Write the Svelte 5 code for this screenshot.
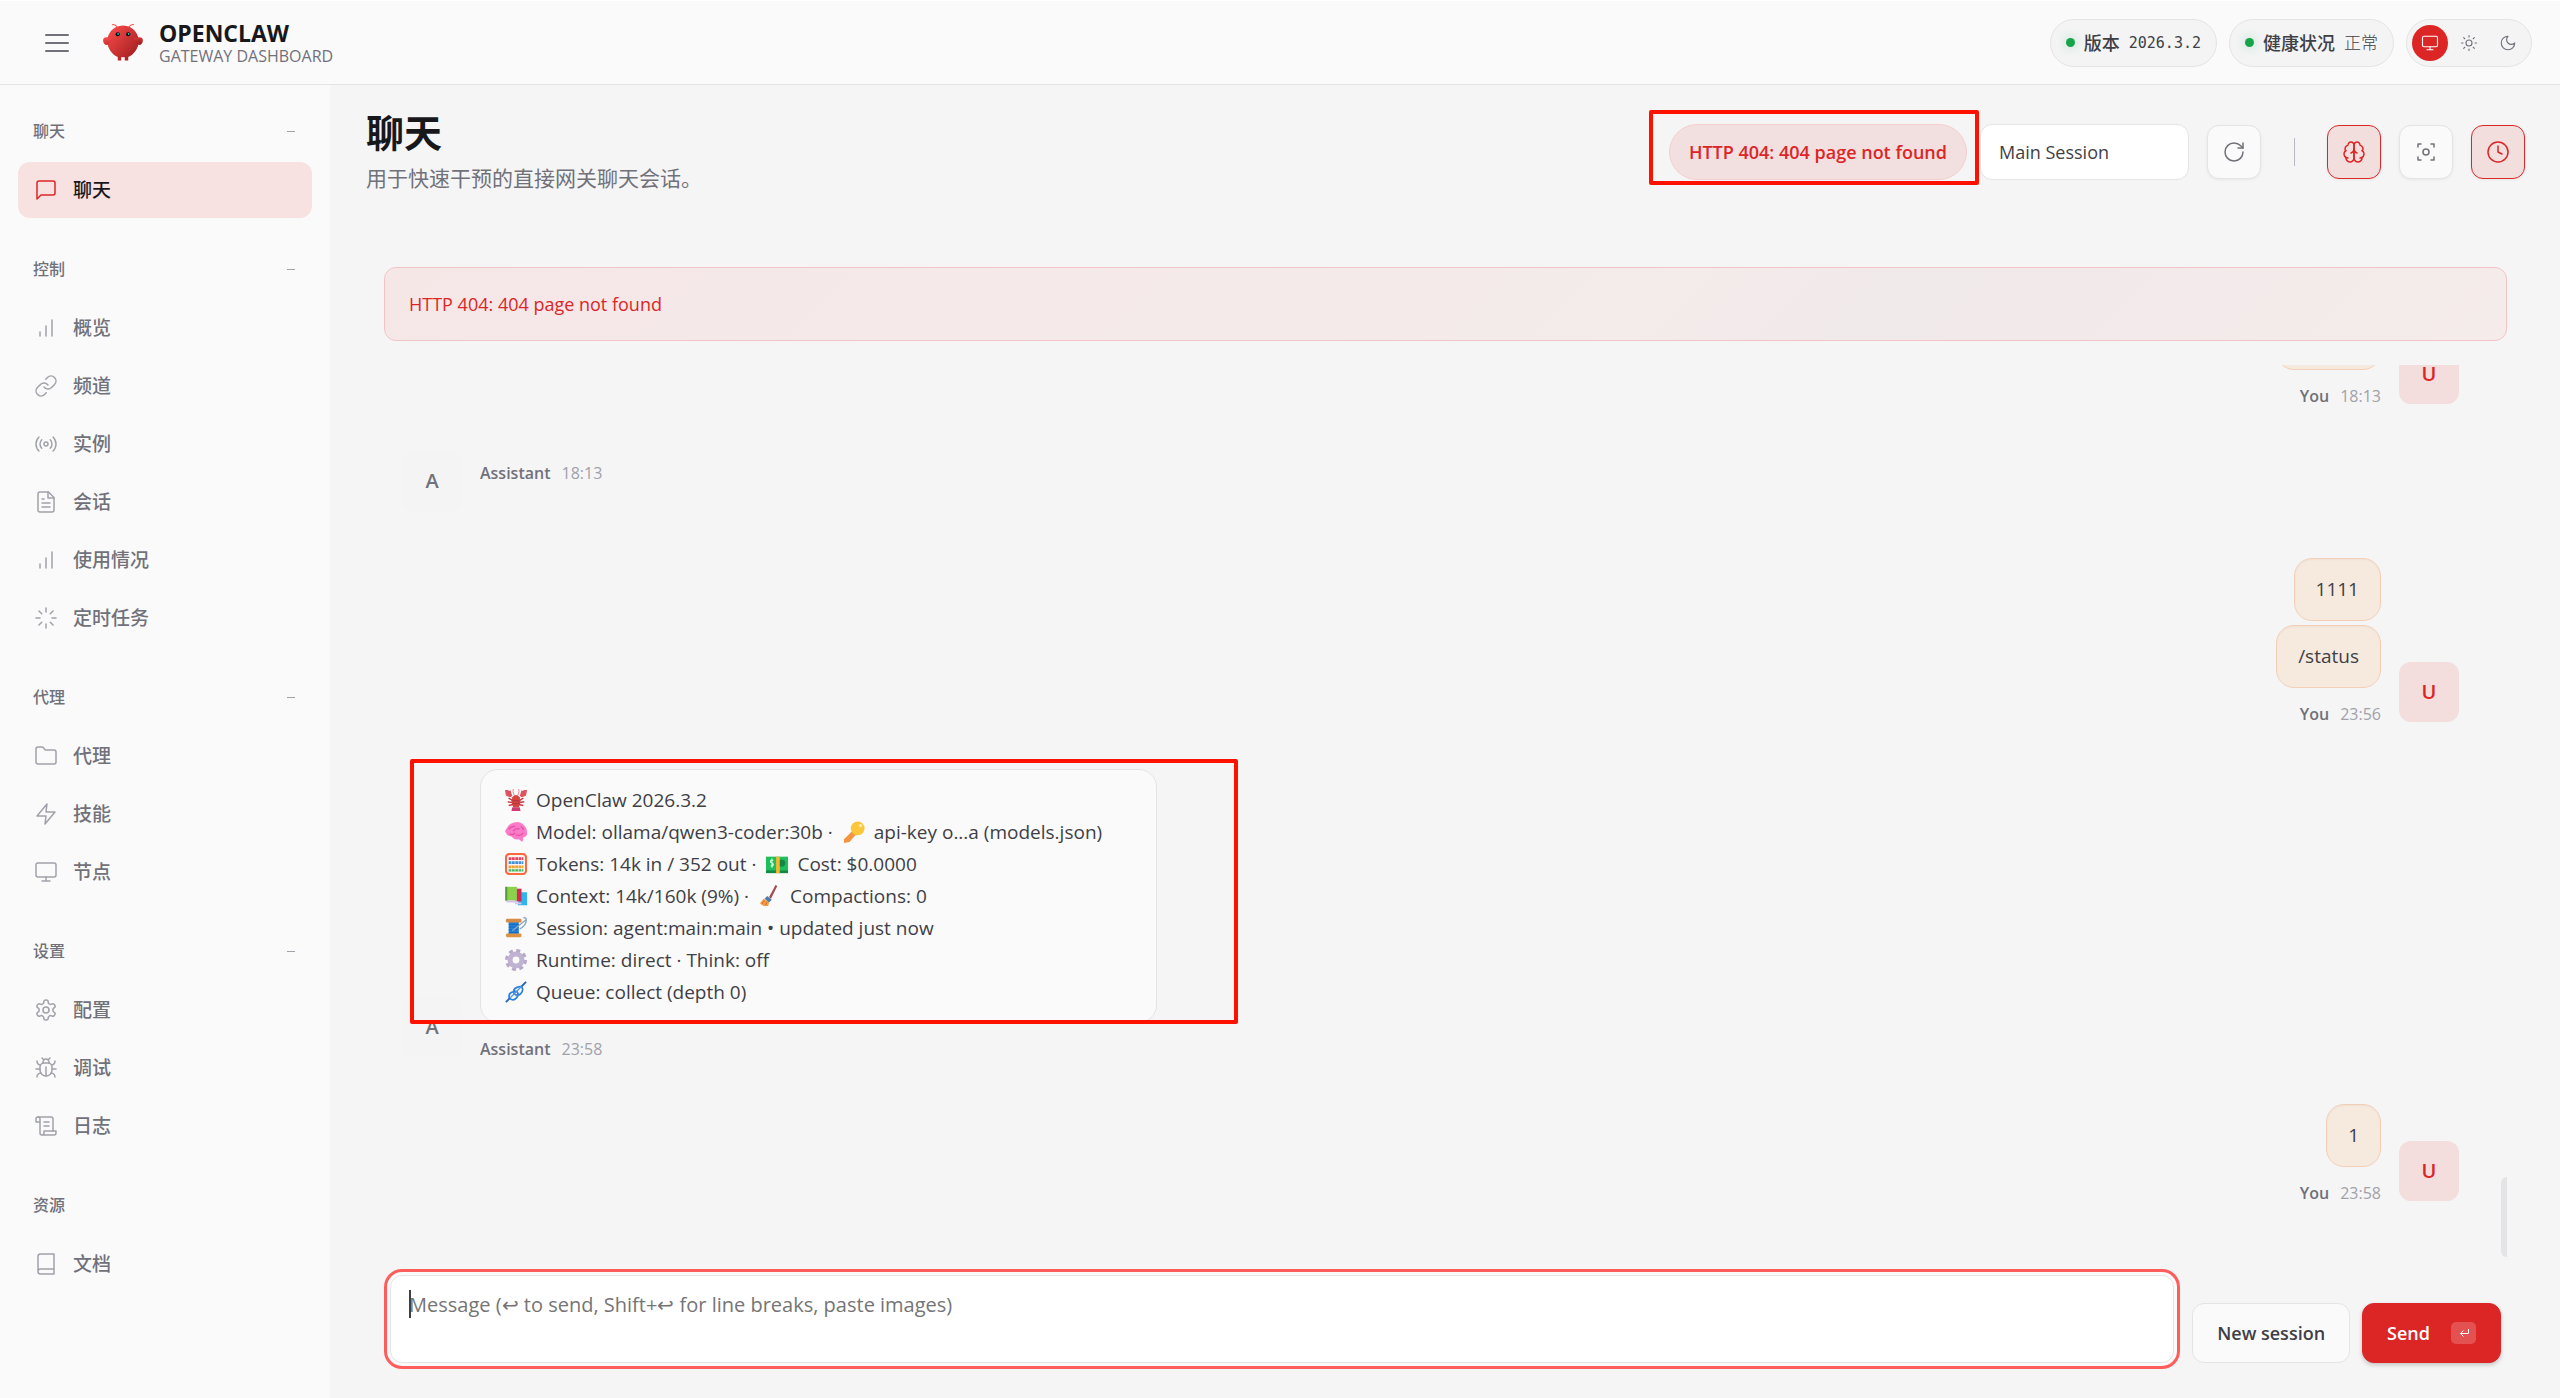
<script>
  const icons = {
    chat: '<path d="M21 15a2 2 0 0 1-2 2H7l-4 4V5a2 2 0 0 1 2-2h14a2 2 0 0 1 2 2z"/>',
    bars: '<path d="M12 20V10M18 20V4M6 20v-4"/>',
    link: '<path d="M10 13a5 5 0 0 0 7.54.54l3-3a5 5 0 0 0-7.07-7.07l-1.72 1.71"/><path d="M14 11a5 5 0 0 0-7.54-.54l-3 3a5 5 0 0 0 7.07 7.07l1.71-1.71"/>',
    radio: '<circle cx="12" cy="12" r="2"/><path d="M16.24 7.76a6 6 0 0 1 0 8.49m-8.48-.01a6 6 0 0 1 0-8.49m11.31-2.82a10 10 0 0 1 0 14.14m-14.14 0a10 10 0 0 1 0-14.14"/>',
    file: '<path d="M14.5 2H6a2 2 0 0 0-2 2v16a2 2 0 0 0 2 2h12a2 2 0 0 0 2-2V7.5L14.5 2z"/><path d="M14 2v6h6M16 13H8M16 17H8M10 9H8"/>',
    loader: '<path d="M12 2v4M12 18v4M4.93 4.93l2.83 2.83M16.24 16.24l2.83 2.83M2 12h4M18 12h4M4.93 19.07l2.83-2.83M16.24 7.76l2.83-2.83"/>',
    folder: '<path d="M4 20h16a2 2 0 0 0 2-2V8a2 2 0 0 0-2-2h-7.93a2 2 0 0 1-1.66-.9l-.82-1.2A2 2 0 0 0 7.93 3H4a2 2 0 0 0-2 2v13c0 1.1.9 2 2 2Z"/>',
    zap: '<path d="M13 2 3 14h9l-1 8 10-12h-9l1-8z"/>',
    monitor: '<rect x="2" y="3" width="20" height="14" rx="2"/><path d="M8 21h8M12 17v4"/>',
    gear: '<path d="M12.22 2h-.44a2 2 0 0 0-2 2v.18a2 2 0 0 1-1 1.73l-.43.25a2 2 0 0 1-2 0l-.15-.08a2 2 0 0 0-2.73.73l-.22.38a2 2 0 0 0 .73 2.73l.15.1a2 2 0 0 1 1 1.72v.51a2 2 0 0 1-1 1.74l-.15.09a2 2 0 0 0-.73 2.73l.22.38a2 2 0 0 0 2.73.73l.15-.08a2 2 0 0 1 2 0l.43.25a2 2 0 0 1 1 1.73V20a2 2 0 0 0 2 2h.44a2 2 0 0 0 2-2v-.18a2 2 0 0 1 1-1.73l.43-.25a2 2 0 0 1 2 0l.15.08a2 2 0 0 0 2.73-.73l.22-.39a2 2 0 0 0-.73-2.73l-.15-.08a2 2 0 0 1-1-1.74v-.5a2 2 0 0 1 1-1.74l.15-.09a2 2 0 0 0 .73-2.73l-.22-.38a2 2 0 0 0-2.73-.73l-.15.08a2 2 0 0 1-2 0l-.43-.25a2 2 0 0 1-1-1.73V4a2 2 0 0 0-2-2z"/><circle cx="12" cy="12" r="3"/>',
    bug: '<path d="m8 2 1.88 1.88M14.12 3.88 16 2M9 7.13v-1a3.003 3.003 0 1 1 6 0v1"/><path d="M12 20c-3.3 0-6-2.7-6-6v-3a4 4 0 0 1 4-4h4a4 4 0 0 1 4 4v3c0 3.3-2.7 6-6 6"/><path d="M12 20v-9M6.53 9C4.6 8.8 3 7.1 3 5M6 13H2M3 21c0-2.1 1.7-3.9 3.8-4M20.97 5c0 2.1-1.6 3.8-3.5 4M22 13h-4M17.2 17c2.1.1 3.8 1.9 3.8 4"/>',
    scroll: '<path d="M8 21h12a2 2 0 0 0 2-2v-2H10v2a2 2 0 1 1-4 0V5a2 2 0 1 0-4 0v3h4"/><path d="M19 17V5a2 2 0 0 0-2-2H4M15 8h-5M15 12h-5"/>',
    book: '<path d="M4 19.5v-15A2.5 2.5 0 0 1 6.5 2H20v20H6.5a2.5 2.5 0 0 1 0-5H20"/>',
    menu: '<path d="M1 4h22M1 12h22M1 20h22"/>',
    sun: '<circle cx="12" cy="12" r="4"/><path d="M12 2v2M12 20v2M4.93 4.93l1.41 1.41M17.66 17.66l1.41 1.41M2 12h2M20 12h2M6.34 17.66l-1.41 1.41M19.07 4.93l-1.41 1.41"/>',
    moon: '<path d="M12 3a6 6 0 0 0 9 9 9 9 0 1 1-9-9Z"/>',
    refresh: '<path d="M21 12a9 9 0 1 1-9-9c2.52 0 4.93 1 6.74 2.74L21 8"/><path d="M21 3v5h-5"/>',
    brain: '<path d="M12 5a3 3 0 1 0-5.997.125 4 4 0 0 0-2.526 5.77 4 4 0 0 0 .556 6.588A4 4 0 1 0 12 18Z"/><path d="M12 5a3 3 0 1 1 5.997.125 4 4 0 0 1 2.526 5.77 4 4 0 0 1-.556 6.588A4 4 0 1 1 12 18Z"/><path d="M15 13a4.5 4.5 0 0 1-3-4 4.5 4.5 0 0 1-3 4"/><path d="M3.477 10.896a4 4 0 0 1 .585-.396M19.938 10.5a4 4 0 0 1 .585.396M6 18a4 4 0 0 1-1.967-.516M19.967 17.484A4 4 0 0 1 18 18"/>',
    focus: '<circle cx="12" cy="12" r="3"/><path d="M4 7V4h3M17 4h3v3M20 17v3h-3M7 20H4v-3"/>',
    clock: '<circle cx="12" cy="12" r="10"/><path d="M12 6v6l4 2"/>'
  };

  const emoji = {
    lobster: '<path d="M6 9 3 5 1 1l4 1 3 5zM18 9l3-4 2-4-4 1-3 5z" fill="#d9485f"/><path d="M0 1h3l1 3 2-3 1 4-2 4-4-2zM24 1h-3l-1 3-2-3-1 4 2 4 4-2z" fill="#e0525c"/><path d="M10 7Q8 2 9 0M14 7q2-5 1-7" stroke="#e08090" fill="none"/><path d="m4 10 5 3M3 14l6 1M4 18l5-1M20 10l-5 3M21 14l-6 1M20 18l-5-1" stroke="#c63b4a" stroke-width="1.6"/><path d="M8 9q4-5 8 0l1 5-2 6H9l-2-6z" fill="#d8453f"/><path d="M8 13h8M8 16h8" stroke="#a93045"/><path d="M8 20h8l1 4H7z" fill="#cf3a70"/>',
    brain: '<path d="M2 8q2-5 7-6 6-2 10 1 5 4 5 9 1 5-4 6l-1 5-4-3q-5 1-8-3-5-1-6-4-2-2 1-5z" fill="#fb7bc9"/><path d="M4 9q3-4 7-3M9 11q3-4 7-2M5 14q4 2 6-1M12 15q5 2 8-2M17 6q3 1 3 4" stroke="#df50a5" fill="none" stroke-width="1.4"/>',
    key: '<path d="m11 10 4 4-8 9-6 1v-4z" fill="#f6953f"/><circle cx="16" cy="8" r="7.5" fill="#fcc63a"/><circle cx="19" cy="5" r="1.8" fill="#fff2c0"/>',
    abacus: '<rect x="1" y="1" width="22" height="22" rx="4" fill="#fff4ee" stroke="#fa6a40" stroke-width="2.4"/><path d="M4 6h16" stroke="#e84366" stroke-width="3" stroke-dasharray="3 .6"/><path d="M4 10.500h16" stroke="#4091db" stroke-width="3" stroke-dasharray="3 .6"/><path d="M4 15h16" stroke="#f0a232" stroke-width="3" stroke-dasharray="3 .6"/><path d="M4 19h16" stroke="#40b864" stroke-width="2.600" stroke-dasharray="3 .6"/>',
    money: '<path d="M0 5h24v17H0z" fill="#158944"/><path d="M0 4h24v15H0z" fill="#1fbf60"/><circle cx="17" cy="11" r="4" fill="#168646"/><path d="M11 4h4v18h-4z" fill="#f8b52d"/><path d="M8 8q-4-1-3 2l3 2q0 3-3 2M6.500 6v10" stroke="#d5ffe0" fill="none" stroke-width="1.2"/>',
    books: '<path d="M16 8h8v14H14z" fill="#31b5ef"/><path d="M11 4h7v14h-7z" fill="#d72758"/><path d="M0 2h13v15H0z" fill="#8bd14c"/><path d="M1 17h12v2H2zM11 19h7v2h-7z" fill="#d5c4e8"/><path d="M1.500 2v15" stroke="#549c3a" stroke-width="2"/>',
    broom: '<path d="m18 0 2 1-7 14-2-2z" fill="#a34b50"/><path d="m9 12 5 4-3 3-5-4z" fill="#4f7da8"/><path d="m5 15 6 4-1 4H5l-4-3z" fill="#f79d43"/><path d="m3 21 3-4M7 22l2-4" stroke="#d9642a"/>',
    thread: '<path d="M4 5h11v14H4z" fill="#2383dc"/><path d="M4 8h11M4 11h11M4 14h11M4 17h11" stroke="#1266b8"/><rect x="1" y="2" width="17" height="4" rx="1.500" fill="#d98a46"/><rect x="1" y="18" width="17" height="4" rx="1.500" fill="#df9143"/><path d="M8 15 23 3M20 1q4-1 3 4t-7 8" stroke="#8da5c1" stroke-width="1.5" fill="none"/>',
    cog: '<circle cx="12" cy="12" r="10" fill="none" stroke="#b6a8ca" stroke-width="4" stroke-dasharray="4.200 3.650"/><circle cx="12" cy="12" r="6.500" fill="none" stroke="#bfb3d1" stroke-width="5.500"/>',
    knot: '<path d="m1 23 5-5M18 6l5-5" stroke="#2766b8" stroke-width="2"/><path d="M5 19q-2-5 3-7t6 1-2 6-7 0ZM10 14q-2-5 3-7t6 1-2 6-7 0Z" fill="none" stroke="#2f80dc" stroke-width="1.900"/><path d="m6 18 12-12" stroke="#4a97e8" stroke-width="1.400"/>'
  };

  const groups = [
    { title: '聊天', fold: true, items: [['chat', '聊天']] },
    { title: '控制', fold: true, items: [['bars', '概览'], ['link', '频道'], ['radio', '实例'], ['file', '会话'], ['bars', '使用情况'], ['loader', '定时任务']] },
    { title: '代理', fold: true, items: [['folder', '代理'], ['zap', '技能'], ['monitor', '节点']] },
    { title: '设置', fold: true, items: [['gear', '配置'], ['bug', '调试'], ['scroll', '日志']] },
    { title: '资源', fold: false, items: [['book', '文档']] }
  ];

  const status = [
    [['lobster', 'OpenClaw 2026.3.2']],
    [['brain', 'Model: ollama/qwen3-coder:30b ·'], ['key', 'api-key o...a (models.json)']],
    [['abacus', 'Tokens: 14k in / 352 out ·'], ['money', 'Cost: $0.0000']],
    [['books', 'Context: 14k/160k (9%) ·'], ['broom', 'Compactions: 0']],
    [['thread', 'Session: agent:main:main • updated just now']],
    [['cog', 'Runtime: direct · Think: off']],
    [['knot', 'Queue: collect (depth 0)']]
  ];

  const messages = [
    { who: 'You', time: '18:13', texts: ['/status'] },
    { who: 'Assistant', time: '18:13', texts: [] },
    { who: 'You', time: '23:56', texts: ['1111', '/status'] },
    { who: 'Assistant', time: '23:58', texts: [], report: true },
    { who: 'You', time: '23:58', texts: ['1'] }
  ];
</script>

{#snippet icon(name)}
  <svg class="icon" viewBox="0 0 24 24" aria-hidden="true">{@html icons[name]}</svg>
{/snippet}

<div class="app">
  <header class="topbar">
    <button class="menu" aria-label="Menu">{@render icon('menu')}</button>
    <svg class="logo" viewBox="0 0 120 120" aria-hidden="true">
      <defs>
        <linearGradient id="shell" x1="0" y1="0" x2="1" y2="1">
          <stop offset="0" stop-color="#ff4d4d" />
          <stop offset="1" stop-color="#991b1b" />
        </linearGradient>
      </defs>
      <path d="M60 10C30 10 15 35 15 55s15 40 30 45v10h10v-10s5 2 10 0v10h10v-10c15-5 30-25 30-45S90 10 60 10Z" fill="url(#shell)" />
      <path d="M20 45C5 40 0 50 5 60s15 5 20-5 0-10-5-10ZM100 45c15-5 20 5 15 15s-15 5-20-5 0-10 5-10Z" fill="url(#shell)" />
      <path d="M45 15Q35 5 30 8M75 15Q85 5 90 8" stroke="#ff4d4d" stroke-width="3" stroke-linecap="round" fill="none" />
      <circle cx="45" cy="35" r="6" fill="#050810" /><circle cx="75" cy="35" r="6" fill="#050810" />
      <circle cx="46" cy="34" r="2.5" fill="#00e5cc" /><circle cx="76" cy="34" r="2.5" fill="#00e5cc" />
    </svg>
    <div class="brand">
      <strong>OPENCLAW</strong>
      <span>GATEWAY DASHBOARD</span>
    </div>
    <div class="state">
      <div class="pill"><i class="dot"></i><b>版本</b><span class="mono">2026.3.2</span></div>
      <div class="pill"><i class="dot"></i><b>健康状况</b><span class="light">正常</span></div>
      <div class="themes">
        <button class="theme on" aria-label="System">{@render icon('monitor')}</button>
        <button class="theme" aria-label="Light">{@render icon('sun')}</button>
        <button class="theme" aria-label="Dark">{@render icon('moon')}</button>
      </div>
    </div>
  </header>

  <nav class="sidebar">
    {#each groups as group, g}
      <section>
        <button class="group"><span>{group.title}</span>{#if group.fold}<i class="minus"></i>{/if}</button>
        <div class="links">
          {#each group.items as [name, label]}
            <a class="link" class:active={g === 0} href="#{name}">{@render icon(name)}<span>{label}</span></a>
          {/each}
        </div>
      </section>
    {/each}
  </nav>

  <main>
    <div class="head">
      <div>
        <h1>聊天</h1>
        <p>用于快速干预的直接网关聊天会话。</p>
      </div>
      <div class="tools">
        <div class="chip">HTTP 404: 404 page not found</div>
        <select aria-label="Session"><option>Main Session</option></select>
        <button class="tool" aria-label="Refresh">{@render icon('refresh')}</button>
        <i class="divider"></i>
        <button class="tool on" aria-label="Thinking">{@render icon('brain')}</button>
        <button class="tool" aria-label="Focus">{@render icon('focus')}</button>
        <button class="tool on" aria-label="Cron">{@render icon('clock')}</button>
      </div>
    </div>

    <div class="panel">
      <div class="callout">HTTP 404: 404 page not found</div>

      <div class="thread">
        {#each messages as m}
          <div class="message" class:user={m.who === 'You'}>
            <div class="avatar">{m.who === 'You' ? 'U' : 'A'}</div>
            <div class="content">
              {#each m.texts as text}
                <div class="bubble">{text}</div>
              {/each}
              {#if m.report}
                <div class="bubble report">
                  {#each status as line}
                    <div class="line">
                      {#each line as [name, text]}
                        <svg class="emoji" viewBox="0 0 24 24" aria-hidden="true">{@html emoji[name]}</svg><span>{text}</span>
                      {/each}
                    </div>
                  {/each}
                </div>
              {/if}
              <div class="meta"><b>{m.who}</b><span>{m.time}</span></div>
            </div>
          </div>
        {/each}
        <i class="thumb"></i>
      </div>

      <form class="compose">
        <div class="field">
          <textarea aria-label="Message" placeholder="Message (↩ to send, Shift+↩ for line breaks, paste images)"></textarea>
        </div>
        <button type="button" class="btn">New session</button>
        <button type="button" class="btn primary">Send
          <kbd><svg viewBox="0 0 24 24" aria-hidden="true"><path d="M21 4v9H5m6-6-6 6 6 6" /></svg></kbd>
        </button>
      </form>
    </div>
  </main>
</div>

<style>
  :global(body) { margin: 0; }
  .app, .app * { box-sizing: border-box; }
  .app {
    display: grid;
    grid-template: auto minmax(0, 1fr) / 330px minmax(0, 1fr);
    height: 100vh;
    background: #f5f5f5;
    color: #3f3f46;
    font: 400 18px/30px 'Open Sans', 'Noto Sans CJK SC', sans-serif;
  }
  button, select, textarea { font: inherit; color: inherit; margin: 0; }
  button { display: flex; align-items: center; border: 0; padding: 0; background: none; cursor: pointer; }
  .icon { width: 24px; height: 24px; flex: none; fill: none; stroke: currentColor; stroke-width: 1.5; stroke-linecap: round; stroke-linejoin: round; }

  .topbar {
    grid-column: 1 / -1;
    display: flex;
    align-items: center;
    height: 85px;
    padding: 0 28px 0 30px;
    background: #fafafa;
    border-top: 1px solid #fff;
    border-bottom: 1px solid #e4e4e7;
  }
  .menu { width: 54px; height: 54px; justify-content: center; color: #71717a; }
  .menu .icon { stroke-width: 2; }
  .logo { width: 42px; height: 42px; margin: 0 15px 0 18px; }
  .brand { display: flex; flex-direction: column; }
  .brand strong { font-size: 23px; line-height: 26px; font-weight: 700; color: #18181b; }
  .brand span { font-size: 16px; line-height: 20px; font-weight: 500; color: #71717a; }
  .state { display: flex; align-items: center; gap: 12px; margin-left: auto; }
  .pill { display: flex; align-items: center; height: 48px; padding: 0 15px; gap: 9px; border: 1px solid #e4e4e7; border-radius: 24px; background: #f4f4f5; line-height: 24px; }
  .pill b { font-weight: 500; }
  .mono { font-family: 'DejaVu Sans Mono', monospace; font-size: 15px; }
  .light { font-size: 17px; font-weight: 300; }
  .dot { width: 9px; height: 9px; border-radius: 50%; background: #16a34a; box-shadow: 0 0 12px rgba(22, 163, 74, 0.35); }
  .themes { display: flex; gap: 3px; padding: 5px; border: 1px solid #e4e4e7; border-radius: 24px; background: #f4f4f5; }
  .theme { width: 36px; height: 36px; justify-content: center; border-radius: 50%; color: #71717a; }
  .theme .icon { width: 18px; height: 18px; }
  .theme.on { background: #dc2626; color: #fff; }

  .sidebar { padding: 29px 18px; background: #fafafa; overflow: hidden; }
  section { margin-bottom: 34px; }
  .group { width: 100%; height: 34px; padding: 0 17px 0 15px; margin-bottom: 14px; justify-content: space-between; font-size: 16px; font-weight: 500; color: #71717a; }
  .minus { width: 8px; height: 1px; background: #a1a1aa; }
  .links { display: flex; flex-direction: column; gap: 2px; }
  .link { display: flex; align-items: center; gap: 15px; height: 56px; padding: 0 16px; border-radius: 12px; font-size: 19px; font-weight: 500; color: #71717a; text-decoration: none; }
  .link .icon { color: #a1a1aa; }
  .link.active { background: #f8e1e1; color: #18181b; }
  .link.active .icon { color: #dc2626; }

  main { display: flex; flex-direction: column; min-width: 0; padding: 24px 35px 35px 36px; }
  .head { display: flex; align-items: center; justify-content: space-between; }
  h1 { margin: 0 0 8px; font-size: 38px; line-height: 46px; font-weight: 700; color: #18181b; }
  p { margin: 0; padding-bottom: 2px; font-size: 21px; color: #71717a; }
  .tools { display: flex; align-items: center; gap: 18px; }
  .chip { position: relative; padding: 12px 19px; margin-right: -5px; border: 1px solid #f5cfcf; border-radius: 28px; background: #f2dfdf; color: #dc2626; font-weight: 600; }
  .chip::after, .report::after { content: ''; position: absolute; z-index: 1; border: 4px solid #ff1100; border-radius: 2px; pointer-events: none; }
  .chip::after { inset: -15px -13px -6px -21px; }
  select { appearance: none; width: 209px; height: 56px; padding: 0 18px; border: 1px solid #e4e4e7; border-radius: 12px; background: #fff; }
  .tool { width: 54px; height: 54px; justify-content: center; border: 1px solid #e4e4e7; border-radius: 12px; background: #fafafa; color: #71717a; box-shadow: 0 1px 3px rgba(0, 0, 0, 0.06); }
  .tool.on { border-color: #dc2626; background: #f3dede; color: #dc2626; }
  .divider { width: 1px; height: 28px; margin: 0 14px 0 15px; background: #b9b9c4; }

  .panel { display: flex; flex: 1; flex-direction: column; min-height: 0; padding: 0 18px; }
  .callout { margin: 72px 0 24px; padding: 21px 24px; border: 1px solid #f3c3c5; border-radius: 12px; background: linear-gradient(135deg, #f6e7e7, #f4ebeb 60%, #f1eaea 70%, #f5ebeb); color: #dc2626; }
  .thread { position: relative; display: flex; flex: 1; flex-direction: column; justify-content: flex-end; gap: 43px; min-height: 0; padding: 0 48px 52px 18px; overflow: hidden; }
  .message { display: flex; flex: none; gap: 18px; }
  .message.user { flex-direction: row-reverse; }
  .avatar { display: flex; align-items: center; justify-content: center; align-self: flex-end; width: 60px; height: 60px; margin-bottom: 4px; border-radius: 12px; background: #f4f4f4; color: #71717a; font-size: 20px; font-weight: 600; }
  .user .avatar { background: #f3dddd; color: #dc2626; }
  .content { display: flex; flex-direction: column; align-items: flex-start; }
  .user .content { align-items: flex-end; }
  .bubble { position: relative; margin-bottom: 4px; padding: 15px 21px 16px; border: 1px solid #f4cfb8; border-radius: 18px; background: #f6eadf; font-size: 19px; box-shadow: inset 0 1px 2px rgba(120, 80, 40, 0.06); }
  .report { padding: 14px 54px 14px 24px; border-color: #e4e4e7; background: #fafafa; box-shadow: none; }
  .report::after { inset: -11px -82px -2px -71px; }
  .line { display: flex; align-items: center; height: 32px; white-space: nowrap; }
  .emoji { width: 22px; height: 22px; margin-right: 9px; }
  .line span + .emoji { margin-left: 10px; }
  .meta { display: flex; gap: 11px; margin-top: 10px; font-size: 16px; line-height: 24px; color: #a1a1aa; }
  .meta b { font-weight: 600; color: #71717a; }
  .thumb { position: absolute; right: 0; bottom: 0; width: 6px; height: 80px; border-radius: 6px 0 0 6px; background: #e4e4e7; }

  .compose { display: flex; align-items: flex-end; gap: 12px; padding: 0 6px; margin-top: 18px; }
  .field { position: relative; flex: 1; height: 88px; margin-right: 6px; }
  .field::after { content: ''; position: absolute; left: 19px; top: 15px; width: 2px; height: 28px; background: #3f3f46; }
  textarea { display: block; width: 100%; height: 100%; padding: 14px 18px; border: 1px solid #e4e4e7; border-radius: 12px; background: #fff; font-size: 20px; resize: none; outline: none; box-shadow: 0 0 0 3px #fafafa, 0 0 0 6px #ff5c5c; }
  textarea::placeholder { color: #757575; opacity: 1; }
  .btn { height: 60px; padding: 0 24px; border: 1px solid #e4e4e7; border-radius: 12px; background: #fafafa; font-weight: 600; }
  .primary { gap: 21px; border-color: #dc2626; background: #dc2626; color: #fff; box-shadow: 0 2px 4px rgba(0, 0, 0, 0.2); }
  kbd { display: flex; align-items: center; justify-content: center; width: 25px; height: 22px; border-radius: 5px; background: rgba(255, 255, 255, 0.2); }
  kbd svg { width: 12px; height: 12px; fill: none; stroke: #fff; stroke-width: 2; }
</style>
